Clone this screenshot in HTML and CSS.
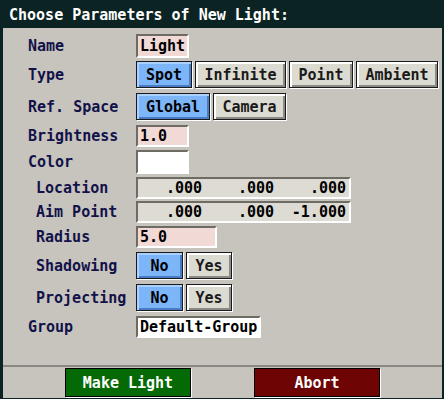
FILE: index.html
```html
<!DOCTYPE html>
<html>
<head>
<meta charset="utf-8">
<link rel="stylesheet" href="styles.css">
</head>
<body>
<div class="dialog">
  <div class="title">Choose Parameters of New Light:</div>
  <div class="panel">
    <div class="row h24">
      <div class="label">Name</div>
      <div class="field pink w53">Light</div>
    </div>
    <div class="row h28">
      <div class="label">Type</div>
      <div class="btns">
        <div class="btn on w56">Spot</div>
        <div class="btn w91">Infinite</div>
        <div class="btn w64">Point</div>
        <div class="btn w82">Ambient</div>
      </div>
    </div>
    <div class="row h28 sp">
      <div class="label">Ref. Space</div>
      <div class="btns">
        <div class="btn on w74">Global</div>
        <div class="btn w73">Camera</div>
      </div>
    </div>
    <div class="row h22 sp">
      <div class="label">Brightness</div>
      <div class="field pink w53">1.0</div>
    </div>
    <div class="row h24">
      <div class="label">Color</div>
      <div class="field white w53"></div>
    </div>
    <div class="row h22">
      <div class="label ind">Location</div>
      <div class="field grey vec">
        <span class="c1">.000</span><span class="c2">.000</span><span class="c2">.000</span>
      </div>
    </div>
    <div class="row h22 tight">
      <div class="label ind">Aim Point</div>
      <div class="field grey vec">
        <span class="c1">.000</span><span class="c2">.000</span><span class="c2">-1.000</span>
      </div>
    </div>
    <div class="row h22">
      <div class="label ind">Radius</div>
      <div class="field pink w81">5.0</div>
    </div>
    <div class="row h28 sp">
      <div class="label ind">Shadowing</div>
      <div class="btns">
        <div class="btn on w47">No</div>
        <div class="btn w46">Yes</div>
      </div>
    </div>
    <div class="row h28 sp">
      <div class="label ind">Projecting</div>
      <div class="btns">
        <div class="btn on w47">No</div>
        <div class="btn w46">Yes</div>
      </div>
    </div>
    <div class="row h22 sp">
      <div class="label">Group</div>
      <div class="field white w125">Default-Group</div>
    </div>
  </div>
  <div class="actions">
    <div class="action make">Make Light</div>
    <div class="action abort">Abort</div>
  </div>
</div>
</body>
</html>
```
FILE: styles.css
```css
html, body {
  margin: 0;
  padding: 0;
  background: #0b2323;
}
body {
  width: 444px;
  height: 399px;
  overflow: hidden;
  font-family: "DejaVu Sans Mono", "Liberation Mono", monospace;
  font-weight: bold;
  font-size: 15px;
}
.dialog {
  width: 444px;
  height: 399px;
  display: flex;
  flex-direction: column;
  background: #0b2323;
}
.title {
  height: 28px;
  line-height: 30px;
  padding-left: 9px;
  color: #ffffff;
  white-space: pre;
}
.panel {
  margin: 0 2px 0 3px;
  height: 337px;
  box-sizing: border-box;
  padding: 6px 0 0 25px;
  background: #c7c4bd;
  display: flex;
  flex-direction: column;
  gap: 3px;
}
.row {
  display: flex;
  align-items: center;
}
.row.sp { margin-top: 1px; }
.row.tight { margin-top: -1px; }
.h22 { height: 22px; }
.h24 { height: 24px; }
.h28 { height: 28px; }
.label {
  width: 108px;
  color: #12124a;
  white-space: pre;
}
.label.ind { padding-left: 8px; box-sizing: border-box; }
.field {
  box-sizing: border-box;
  height: 100%;
  border-style: solid;
  border-width: 2px;
  border-color: #6e6a64 #ffffff #ffffff #6e6a64;
  padding-left: 2px;
  color: #000;
  display: flex;
  align-items: center;
  white-space: pre;
}
.pink { background: #f1d9d6; }
.white { background: #ffffff; }
.grey { background: #dedbd4; }
.w53 { width: 53px; }
.w81 { width: 81px; }
.w125 { width: 125px; }
.vec {
  width: 215px;
  padding-left: 0;
  padding-right: 3px;
}
.vec span { text-align: right; display: block; }
.vec .c1 { width: 64px; }
.vec .c2 { width: 72px; }
.btns {
  display: flex;
  gap: 3px;
  height: 100%;
}
.btn {
  box-sizing: border-box;
  height: 27px;
  border: 1px solid #1a1a1a;
  background: #dcdbd2;
  box-shadow: 1px 1px 0 #ffffff, inset 2px 2px 0 #ffffff, inset -2px -2px 0 #8c8a84;
  color: #1a1a1a;
  display: flex;
  align-items: center;
  justify-content: center;
  white-space: pre;
}
.btn.on {
  background: #7db5f9;
  box-shadow: 1px 1px 0 #ffffff, inset 2px 2px 0 #a9d0ff, inset -2px -2px 0 #4a7cc4;
  color: #000;
}
.w46 { width: 46px; }
.w47 { width: 47px; }
.w56 { width: 56px; }
.w64 { width: 64px; }
.w73 { width: 73px; }
.w74 { width: 74px; }
.w82 { width: 82px; }
.w91 { width: 91px; }
.actions {
  margin: 0 2px 0 3px;
  height: 30px;
  border-top: 2px solid #8a8884;
  background: #c7c4bd;
  display: flex;
  justify-content: center;
  gap: 63px;
  padding-top: 1px;
  box-sizing: content-box;
}
.action {
  box-sizing: border-box;
  width: 126px;
  height: 29px;
  border: 1px solid #000;
  box-shadow: 1px 1px 0 #ffffff;
  color: #ffffff;
  display: flex;
  align-items: center;
  justify-content: center;
  white-space: pre;
}
.make { background: #056a05; }
.abort { background: #6e0404; }
```
